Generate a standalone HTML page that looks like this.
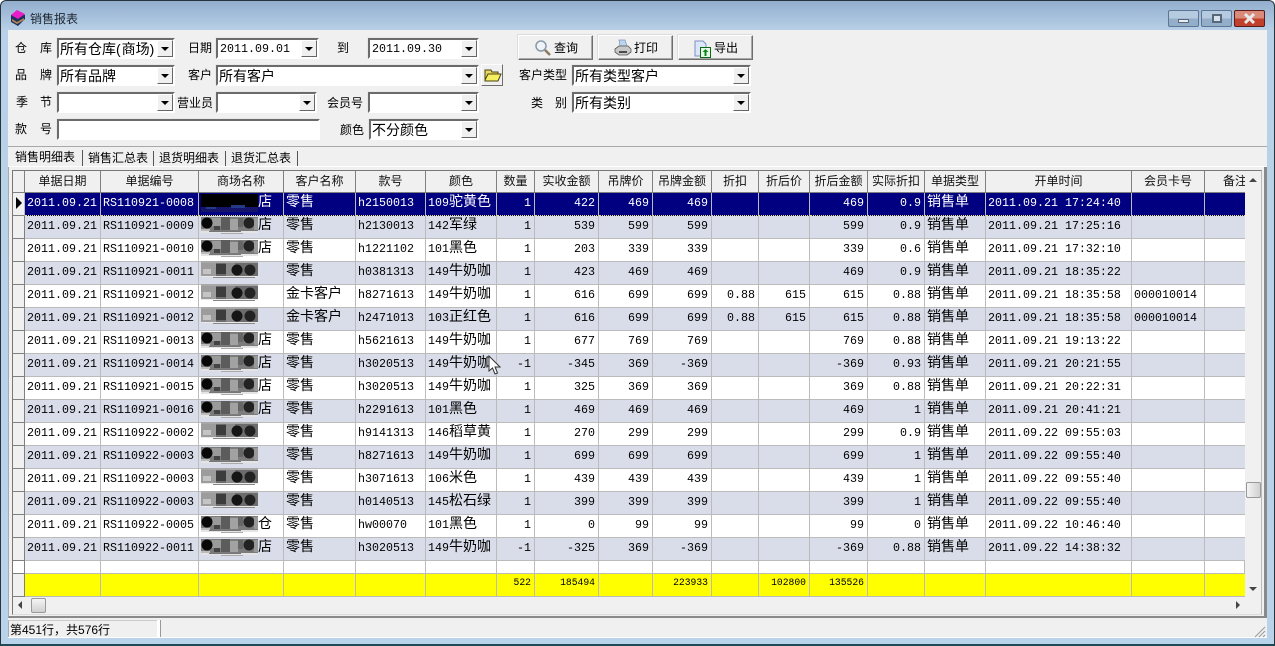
<!DOCTYPE html>
<html><head><meta charset="utf-8"><style>
*{box-sizing:border-box}
html,body{margin:0;padding:0;width:1275px;height:646px;overflow:hidden;background:#fff}
body{position:relative;font:12px "Liberation Sans","WenQuanYi Zen Hei","Noto Sans CJK SC",sans-serif;color:#000}
div,svg,span.l{position:absolute}
#win{left:0;top:0;width:1275px;height:646px;border:1px solid #26343c;border-radius:6px 6px 0 0;background:linear-gradient(#93aecd 0,#b8d1e8 30px,#b8d3ea 100%);border-bottom:2px solid #1f4a55}
#client{left:8px;top:30px;width:1259px;height:608px;background:#f0f0f0}
.l{white-space:nowrap;line-height:14px;font-size:12px}
.cb{background:#fff;border:2px solid;border-color:#6b6b6b #fff #fff #6b6b6b;box-shadow:-1px -1px 0 #e8e8e8;height:21px;font:14px/18px "Liberation Sans","WenQuanYi Zen Hei","Noto Sans CJK SC",sans-serif;padding-left:1px;white-space:nowrap;overflow:hidden}
.m{font:11.67px/19px "Liberation Mono",monospace;padding-left:2px}
.dd{right:0;top:0;width:16px;height:17px;background:#f0f0f0;border:1px solid;border-color:#fff #666 #666 #fff}
.dd:after{content:"";position:absolute;left:3px;top:6px;border:4px solid transparent;border-top:4px solid #000;border-bottom:0}
.btn{height:25px;width:75px;top:35px;background:#f0f0f0;border:1px solid;border-color:#fff #6e6e6e #6e6e6e #fff;box-shadow:inset -1px -1px 0 #a8a8a8,-1px -1px 0 #ddd;font-size:12px;line-height:22px}
.btn span{position:absolute;top:1px}
table{position:absolute;left:13px;top:171px;width:1232px;border-collapse:separate;border-spacing:0;table-layout:fixed}
td{height:23px;padding:0 3px 3px 2px;border-right:1px solid #bbb;border-bottom:1px solid #bbb;font:11.67px/18px "Liberation Mono",monospace;white-space:nowrap;overflow:hidden;background:#fff}
td:last-child{border-right:0}
i{font:normal 14px/14px "WenQuanYi Zen Hei","Noto Sans CJK SC",sans-serif}
td:nth-child(n+8):nth-child(-n+15){text-align:right}
td:first-child{background:#f0f0f0;border-color:#808080;padding:0}
tr.h td{height:22px;background:#f0f0f0;border-color:#808080;text-align:center!important;padding:0 0 2px;font:12px/18px "WenQuanYi Zen Hei","Noto Sans CJK SC",sans-serif;color:#111}
tr:nth-child(odd) td{background:#d9dde9}
tr:nth-child(odd) td:first-child{background:#f0f0f0}
tr.h td{background:#f0f0f0}
tr.s td{background:#000080;color:#fff;border-right-color:#bbb;border-bottom:1px dotted #e8e070}
tr.s td:first-child{background:#f0f0f0;color:#000;border-bottom:1px solid #808080}
tr.e td{height:13px;padding:0;line-height:10px;background:#fff!important}
tr.y td{background:#ff0!important;font:9.7px/14px "Liberation Mono",monospace;padding-bottom:5px}
tr.y td:first-child{background:#f0f0f0!important}
.tab{top:151px;height:15px;border-right:1px solid #555;font-size:12px;line-height:14px;padding:0 0 0 4px;white-space:nowrap}
</style></head><body>
<div id="win"></div>
<svg style="left:9px;top:9px" width="18" height="18" viewBox="0 0 18 18"><path d="M2 6 9 2l7 4v4l-7 7-7-4z" fill="#20305c"/><path d="M2 6 8 1l8 4-7 5z" fill="#e81cc8"/><path d="M3 10l5 3 7-4v2l-7 4-5-3z" fill="#b08850"/></svg>
<span class="l" style="left:30px;top:12px;color:#1c2630">销售报表</span>
<div style="left:1168px;top:10px;width:31px;height:17px;border:1px solid #5a7595;border-radius:2px;background:linear-gradient(#b6cbe0 50%,#94aec9 50%)"><div style="left:9px;top:8px;width:11px;height:4px;background:#e8eef4;border:1px solid #567"></div></div>
<div style="left:1201px;top:10px;width:31px;height:17px;border:1px solid #5a7595;border-radius:2px;background:linear-gradient(#b6cbe0 50%,#94aec9 50%)"><div style="left:10px;top:3px;width:10px;height:9px;background:#d8e2ec;border:2px solid #56687a"></div></div>
<div style="left:1234px;top:10px;width:31px;height:17px;border:1px solid #5c1a1a;border-radius:2px;background:linear-gradient(#d98a78 50%,#c0402c 50%)"><svg style="left:8px;top:2px" width="13" height="11"><path d="M2 1 11 10M11 1 2 10" stroke="#e8e8e8" stroke-width="3"/></svg></div>
<div id="client"></div>

<span class="l" style="left:15px;top:41px">仓</span><span class="l" style="left:40px;top:41px">库</span>
<span class="l" style="left:188px;top:41px">日期</span><span class="l" style="left:337px;top:41px">到</span>
<span class="l" style="left:15px;top:68px">品</span><span class="l" style="left:40px;top:68px">牌</span>
<span class="l" style="left:188px;top:68px">客户</span>
<span class="l" style="left:16px;top:95px">季</span><span class="l" style="left:40px;top:95px">节</span>
<span class="l" style="left:177px;top:96px">营业员</span><span class="l" style="left:327px;top:96px">会员号</span>
<span class="l" style="left:15px;top:122px">款</span><span class="l" style="left:40px;top:122px">号</span>
<span class="l" style="left:340px;top:123px">颜色</span>
<span class="l" style="left:519px;top:68px">客户类型</span>
<span class="l" style="left:531px;top:96px">类</span><span class="l" style="left:555px;top:96px">别</span>

<div class="cb" style="left:57px;top:38px;width:118px">所有仓库<span style="letter-spacing:1px">(</span>商场<span style="letter-spacing:1px">)</span><div class="dd"></div></div>
<div class="cb m" style="left:216px;top:38px;width:103px">2011.09.01<div class="dd"></div></div>
<div class="cb m" style="left:368px;top:38px;width:111px">2011.09.30<div class="dd"></div></div>
<div class="cb" style="left:57px;top:65px;width:118px">所有品牌<div class="dd"></div></div>
<div class="cb" style="left:216px;top:65px;width:263px">所有客户<div class="dd"></div></div>
<div class="cb" style="left:57px;top:92px;width:118px"><div class="dd"></div></div>
<div class="cb" style="left:216px;top:92px;width:101px"><div class="dd"></div></div>
<div class="cb" style="left:368px;top:92px;width:111px"><div class="dd"></div></div>
<div class="cb" style="left:57px;top:119px;width:263px"></div>
<div class="cb" style="left:369px;top:119px;width:110px">不分颜色<div class="dd"></div></div>
<div class="cb" style="left:572px;top:65px;width:179px">所有类型客户<div class="dd"></div></div>
<div class="cb" style="left:572px;top:92px;width:179px">所有类别<div class="dd"></div></div>

<div class="btn" style="left:518px"><svg style="left:15px;top:3px" width="18" height="18" viewBox="0 0 18 18"><circle cx="7" cy="7" r="5" fill="#eef4fa" stroke="#8a9aa8" stroke-width="1.5"/><path d="M11 11 16 16" stroke="#8d7a60" stroke-width="2.5"/></svg><span style="left:35px">查询</span></div>
<div class="btn" style="left:598px"><svg style="left:15px;top:3px" width="18" height="18" viewBox="0 0 18 18"><path d="M5 1h6l2 6H6z" fill="#bcd4f0" stroke="#7a94b4" stroke-width=".7"/><path d="M1 10 5 7h9l3 3v3l-4 3H5l-4-3z" fill="#c8c8c8" stroke="#555" stroke-width=".8"/><path d="M5 13h8" stroke="#222" stroke-width="1.5"/></svg><span style="left:35px">打印</span></div>
<div class="btn" style="left:678px"><svg style="left:15px;top:4px" width="18" height="18" viewBox="0 0 18 18"><path d="M1 1h8l3 3v12H1z" fill="#dbe6fa" stroke="#7d8fc0"/><rect x="6.500" y="7.500" width="10" height="10" fill="#e8f8e8" stroke="#0a6a14"/><path d="M11.500 9 8.500 12h2v4h2v-4h2z" fill="#0a8a1c"/></svg><span style="left:35px">导出</span></div>
<div style="left:481px;top:64px;width:22px;height:22px;background:#f0f0f0;border:1px solid;border-color:#fff #6e6e6e #6e6e6e #fff"><svg style="left:2px;top:3px" width="18" height="14" viewBox="0 0 18 14"><path d="M1 12V2h6l1 2h6v2" fill="#e8d860" stroke="#4a4010"/><path d="M1 12 4 6h13l-3 7H1z" fill="#f4f060" stroke="#4a4010"/></svg></div>

<div style="left:8px;top:146px;width:1259px;height:1px;background:#a8a8a8"></div>
<div style="left:8px;top:166px;width:1259px;height:1px;background:#fff"></div>
<div class="tab" style="left:12px;top:150px;width:71px;height:16px;padding:0 0 0 3px">销售明细表</div>
<div class="tab" style="left:84px;width:70px">销售汇总表</div>
<div class="tab" style="left:155px;width:71px">退货明细表</div>
<div class="tab" style="left:227px;width:71px">退货汇总表</div>

<div style="left:8px;top:167px;width:1259px;height:451px;border-right:3px solid #8a8a8a;border-left:1px solid #aaa;border-bottom:2px solid #8a8a8a"></div>
<div style="left:12px;top:170px;width:1250px;height:445px;background:#f0f0f0;border:1px solid #777;border-right-color:#bbb;border-bottom-color:#ddd"></div>

<table>
<colgroup><col width="12"><col width="76"><col width="98"><col width="85"><col width="72"><col width="70"><col width="71"><col width="38"><col width="64"><col width="54"><col width="59"><col width="47"><col width="51"><col width="58"><col width="57"><col width="61"><col width="146"><col width="73"><col width="40"></colgroup>
<tr class="h"><td><td>单据日期<td>单据编号<td>商场名称<td>客户名称<td>款号<td>颜色<td>数量<td>实收金额<td>吊牌价<td>吊牌金额<td>折扣<td>折后价<td>折后金额<td>实际折扣<td>单据类型<td>开单时间<td>会员卡号<td style="text-align:left!important;padding-left:18px">备注</tr>
<tr class="s"><td><td>2011.09.21<td>RS110921-0008<td style="padding-left:59px"><i>店</i><td><i>零售</i><td>h2150013<td>109<i>驼黄色</i><td>1<td>422<td>469<td>469<td><td><td>469<td>0.9<td><i>销售单</i><td>2011.09.21 17:24:40<td><td></tr>
<tr><td><td>2011.09.21<td>RS110921-0009<td style="padding-left:59px"><i>店</i><td><i>零售</i><td>h2130013<td>142<i>军绿</i><td>1<td>539<td>599<td>599<td><td><td>599<td>0.9<td><i>销售单</i><td>2011.09.21 17:25:16<td><td></tr>
<tr><td><td>2011.09.21<td>RS110921-0010<td style="padding-left:59px"><i>店</i><td><i>零售</i><td>h1221102<td>101<i>黑色</i><td>1<td>203<td>339<td>339<td><td><td>339<td>0.6<td><i>销售单</i><td>2011.09.21 17:32:10<td><td></tr>
<tr><td><td>2011.09.21<td>RS110921-0011<td><td><i>零售</i><td>h0381313<td>149<i>牛奶咖</i><td>1<td>423<td>469<td>469<td><td><td>469<td>0.9<td><i>销售单</i><td>2011.09.21 18:35:22<td><td></tr>
<tr><td><td>2011.09.21<td>RS110921-0012<td><td><i>金卡客户</i><td>h8271613<td>149<i>牛奶咖</i><td>1<td>616<td>699<td>699<td>0.88<td>615<td>615<td>0.88<td><i>销售单</i><td>2011.09.21 18:35:58<td>000010014<td></tr>
<tr><td><td>2011.09.21<td>RS110921-0012<td><td><i>金卡客户</i><td>h2471013<td>103<i>正红色</i><td>1<td>616<td>699<td>699<td>0.88<td>615<td>615<td>0.88<td><i>销售单</i><td>2011.09.21 18:35:58<td>000010014<td></tr>
<tr><td><td>2011.09.21<td>RS110921-0013<td style="padding-left:59px"><i>店</i><td><i>零售</i><td>h5621613<td>149<i>牛奶咖</i><td>1<td>677<td>769<td>769<td><td><td>769<td>0.88<td><i>销售单</i><td>2011.09.21 19:13:22<td><td></tr>
<tr><td><td>2011.09.21<td>RS110921-0014<td style="padding-left:59px"><i>店</i><td><i>零售</i><td>h3020513<td>149<i>牛奶咖</i><td>-1<td>-345<td>369<td>-369<td><td><td>-369<td>0.93<td><i>销售单</i><td>2011.09.21 20:21:55<td><td></tr>
<tr><td><td>2011.09.21<td>RS110921-0015<td style="padding-left:59px"><i>店</i><td><i>零售</i><td>h3020513<td>149<i>牛奶咖</i><td>1<td>325<td>369<td>369<td><td><td>369<td>0.88<td><i>销售单</i><td>2011.09.21 20:22:31<td><td></tr>
<tr><td><td>2011.09.21<td>RS110921-0016<td style="padding-left:59px"><i>店</i><td><i>零售</i><td>h2291613<td>101<i>黑色</i><td>1<td>469<td>469<td>469<td><td><td>469<td>1<td><i>销售单</i><td>2011.09.21 20:41:21<td><td></tr>
<tr><td><td>2011.09.21<td>RS110922-0002<td><td><i>零售</i><td>h9141313<td>146<i>稻草黄</i><td>1<td>270<td>299<td>299<td><td><td>299<td>0.9<td><i>销售单</i><td>2011.09.22 09:55:03<td><td></tr>
<tr><td><td>2011.09.21<td>RS110922-0003<td><td><i>零售</i><td>h8271613<td>149<i>牛奶咖</i><td>1<td>699<td>699<td>699<td><td><td>699<td>1<td><i>销售单</i><td>2011.09.22 09:55:40<td><td></tr>
<tr><td><td>2011.09.21<td>RS110922-0003<td><td><i>零售</i><td>h3071613<td>106<i>米色</i><td>1<td>439<td>439<td>439<td><td><td>439<td>1<td><i>销售单</i><td>2011.09.22 09:55:40<td><td></tr>
<tr><td><td>2011.09.21<td>RS110922-0003<td><td><i>零售</i><td>h0140513<td>145<i>松石绿</i><td>1<td>399<td>399<td>399<td><td><td>399<td>1<td><i>销售单</i><td>2011.09.22 09:55:40<td><td></tr>
<tr><td><td>2011.09.21<td>RS110922-0005<td style="padding-left:59px"><i>仓</i><td><i>零售</i><td>hw00070<td>101<i>黑色</i><td>1<td>0<td>99<td>99<td><td><td>99<td>0<td><i>销售单</i><td>2011.09.22 10:46:40<td><td></tr>
<tr><td><td>2011.09.21<td>RS110922-0011<td style="padding-left:59px"><i>店</i><td><i>零售</i><td>h3020513<td>149<i>牛奶咖</i><td>-1<td>-325<td>369<td>-369<td><td><td>-369<td>0.88<td><i>销售单</i><td>2011.09.22 14:38:32<td><td></tr>
<tr class="e"><td><td><td><td><td><td><td><td><td><td><td><td><td><td><td><td><td><td><td><td></tr>
<tr class="y"><td><td><td><td><td><td><td><td>522<td>185494<td><td>223933<td><td>102800<td>135526<td><td><td><td><td></tr>
</table>

<svg style="left:201px;top:193px" width="57" height="375" viewBox="0 0 57 375">
<defs>
<g id="a"><rect width="57" height="14" fill="#7c7c7c"/><rect x="11" y="1" width="9" height="8" fill="#9a9a9a"/><rect x="20" y="0" width="9" height="13" fill="#5c5c5c"/><rect x="29" y="2" width="8" height="11" fill="#a2a2a2"/><rect x="37" y="1" width="5" height="9" fill="#666"/><rect x="13" y="9" width="6" height="4" fill="#444"/><circle cx="6" cy="6" r="5.500" fill="#080808"/><circle cx="48" cy="6" r="5.500" fill="#222"/><rect x="53" y="1" width="4" height="12" fill="#999"/><rect y="12" width="9" height="2" fill="#bbb"/><rect y="14" width="57" height="2" fill="#e4e4e4"/><rect x="8" y="14" width="32" height="1" fill="#777"/><rect x="20" y="16" width="22" height="1" fill="#aaa"/></g>
<g id="b"><rect width="57" height="15" fill="#6c6c6c"/><rect x="0" y="0" width="15" height="15" fill="#9c9c9c"/><rect x="2" y="8" width="8" height="5" fill="#c4c4c4"/><rect x="15" y="3" width="10" height="10" fill="#3c3c3c"/><rect x="25" y="0" width="9" height="15" fill="#8a8a8a"/><circle cx="36" cy="9" r="5.500" fill="#151515"/><circle cx="49" cy="9" r="5.500" fill="#222"/><rect y="0" width="57" height="2" fill="#a8a8a8"/><rect x="0" y="15" width="57" height="1" fill="#e8e8e8"/><rect x="12" y="16" width="42" height="1" fill="#888"/></g>
</defs>
<rect y="1" width="57" height="15" fill="#000"/><rect y="14" width="57" height="5" fill="#14146a"/><rect x="5" y="14" width="10" height="2" fill="#223a88"/><rect x="30" y="12" width="14" height="3" fill="#223a88"/>
<use href="#a" y="24"/><use href="#a" y="47"/><use href="#b" y="68"/><use href="#b" y="91"/><use href="#b" y="114"/><use href="#a" y="139"/><use href="#a" y="162"/><use href="#a" y="185"/><use href="#a" y="208"/><use href="#b" y="229"/><use href="#a" y="254"/><use href="#b" y="275"/><use href="#b" y="298"/><use href="#a" y="323"/><use href="#a" y="346"/>
</svg>

<svg style="left:15px;top:196px" width="9" height="14"><path d="M1 1 7 7 1 13z" fill="#000"/></svg>

<div style="left:1245px;top:171px;width:16px;height:425px;background:#f0f0f0"></div>
<svg style="left:1249px;top:177px" width="9" height="6"><path d="M0 5 4 1 8 5z" fill="#444"/></svg>
<svg style="left:1249px;top:586px" width="9" height="6"><path d="M0 1 4 5 8 1z" fill="#444"/></svg>
<div style="left:1246px;top:482px;width:15px;height:16px;border:1px solid #999;border-radius:2px;background:linear-gradient(90deg,#f4f4f4,#d0d0d0)"></div>
<div style="left:13px;top:597px;width:1232px;height:17px;background:#f0f0f0"></div>
<svg style="left:17px;top:601px" width="6" height="9"><path d="M5 0 1 4 5 8z" fill="#444"/></svg>
<svg style="left:1235px;top:601px" width="6" height="9"><path d="M1 0 5 4 1 8z" fill="#444"/></svg>
<div style="left:31px;top:598px;width:15px;height:15px;border:1px solid #999;border-radius:2px;background:linear-gradient(#f4f4f4,#d0d0d0)"></div>

<svg style="left:488px;top:355px" width="13" height="20" viewBox="0 0 13 20"><path d="M1 1V16L4.500 13 7 19 9.500 18 7 12H12z" fill="#fff" stroke="#333" stroke-width="1"/></svg>

<div style="left:8px;top:620px;width:149px;height:18px;border-left:1px solid #aaa;border-top:1px solid #ccc;background:#f0f0f0"></div>
<div style="left:157px;top:620px;width:3px;height:17px;background:#fff"></div>
<div style="left:160px;top:620px;width:1px;height:17px;background:#999"></div>
<div style="left:8px;top:637px;width:1259px;height:1px;background:#fff"></div>
<span class="l" style="left:10px;top:623px;font-size:12px">第451行，共576行</span>
<svg style="left:1254px;top:626px" width="12" height="12"><path d="M11 1 1 11M11 5 5 11M11 9 9 11" stroke="#999" stroke-width="1"/></svg>
</body></html>
